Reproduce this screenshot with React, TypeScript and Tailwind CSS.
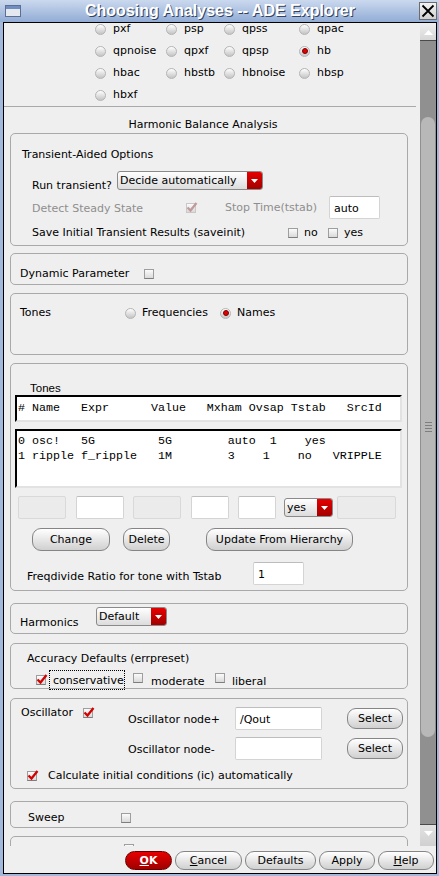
import type { ReactNode } from "react";

const analyses: [string, boolean][] = [
  ["pxf", false],
  ["psp", false],
  ["qpss", false],
  ["qpac", false],
  ["qpnoise", false],
  ["qpxf", false],
  ["qpsp", false],
  ["hb", true],
  ["hbac", false],
  ["hbstb", false],
  ["hbnoise", false],
  ["hbsp", false],
  ["hbxf", false],
];

const mono = "font-['Liberation_Mono',monospace] text-[11.67px]";

function Radio({ on = false }: { on?: boolean }) {
  return (
    <span className="flex h-[11px] w-[11px] shrink-0 items-center justify-center rounded-full border border-[#b4b4b4] bg-gradient-to-b from-white to-[#c4c4c4]">
      {on && <span className="h-[6px] w-[6px] rounded-full border border-[#7a0000] bg-[#e00000]" />}
    </span>
  );
}

function Check({ on = false, dim = false }: { on?: boolean; dim?: boolean }) {
  return (
    <span
      className={`relative inline-block h-[10px] w-[10px] shrink-0 border ${
        dim ? "border-[#c8c8c8]" : "border-[#9e9e9e] border-b-[#7d7d7d]"
      } bg-gradient-to-b from-[#fbfbfb] to-[#dadada]`}
    >
      {on && (
        <svg className="absolute left-[-1px] top-[-3px]" width="12" height="12" viewBox="0 0 12 12">
          <path
            d="M1.5 6.5 L4.5 9.5 L10.5 2"
            fill="none"
            stroke={dim ? "#c39a9a" : "#d40000"}
            strokeWidth="2.3"
          />
        </svg>
      )}
    </span>
  );
}

function Combo({ value, w }: { value: string; w: string }) {
  return (
    <div
      className={`flex h-[19px] ${w} shrink-0 overflow-hidden rounded-[3px] border border-[#8a8a8a] bg-gradient-to-b from-white to-[#dcdcdc]`}
    >
      <span className="flex-1 pl-[2px] leading-[17px]">{value}</span>
      <span className="flex w-[15px] items-center justify-center bg-gradient-to-b from-[#e60000] to-[#a20000]">
        <svg width="7" height="4" viewBox="0 0 7 4">
          <path d="M0 0 H7 L3.5 4 Z" fill="#fff" />
        </svg>
      </span>
    </div>
  );
}

function Field({ w, value, off = false }: { w: string; value?: string; off?: boolean }) {
  return (
    <div
      className={`h-[23px] ${w} shrink-0 rounded-[2px] border ${
        off ? "border-[#d9d9d9] bg-[#ebebeb]" : "border-[#d4d4d4] border-t-[#bdbdbd] bg-white"
      } pl-[4px] pt-[1px] leading-[21px]`}
    >
      {value}
    </div>
  );
}

function Btn({ w, h = "h-[23px]", children }: { w: string; h?: string; children: ReactNode }) {
  return (
    <div
      className={`flex ${h} ${w} shrink-0 items-center justify-center rounded-[9px] border border-[#858585] bg-gradient-to-b from-white to-[#d0d0d0] pt-[1px]`}
    >
      {children}
    </div>
  );
}

function Box({ className, children }: { className: string; children?: ReactNode }) {
  return (
    <div className={`ml-[6px] w-[398px] shrink-0 rounded-[5px] border border-[#a9a9a9] ${className}`}>
      {children}
    </div>
  );
}

function TitleBar() {
  return (
    <div className="flex h-[22px] shrink-0 items-center bg-gradient-to-b from-[#cbd9ee] to-[#92acd5] pl-[5px] pr-[2px]">
      <div className="flex h-[12px] w-[16px] flex-col border border-[#5c6f92] bg-[#e4e9f0]">
        <div className="h-[3px] bg-[#6f8dc0]" />
      </div>
      <div className="flex-1 text-center font-['Liberation_Sans',sans-serif] text-[16px] font-bold leading-[20px] text-white [text-shadow:1px_1px_0_#33425e]">
        Choosing Analyses -- ADE Explorer
      </div>
      <div className="flex h-[18px] w-[18px] items-center justify-center border border-[#6c6c6c] bg-gradient-to-b from-[#f4f4f4] to-[#d0d0d0]">
        <svg width="14" height="14" viewBox="0 0 14 14">
          <path d="M1.5 1.5 L12.5 12.5 M12.5 1.5 L1.5 12.5" stroke="#000" strokeWidth="1.8" />
        </svg>
      </div>
    </div>
  );
}

function ScrollBar() {
  return (
    <div className="flex w-[16px] shrink-0 flex-col bg-[#909090]">
      <div className="flex h-[18px] items-end justify-center border-b border-[#4a4a4a] bg-gradient-to-b from-[#efefef] to-[#d6d6d6] pb-[5px]">
        <svg width="9" height="5" viewBox="0 0 9 5">
          <path d="M0 5 H9 L4.5 0 Z" fill="#fff" />
        </svg>
      </div>
      <div className="h-[76px]" />
      <div className="mx-[1px] flex h-[620px] flex-col items-center justify-center gap-[2px] rounded-[7px] bg-[#b8b8b8]">
        <div className="h-px w-[7px] bg-[#7e7e7e]" />
        <div className="h-px w-[7px] bg-[#7e7e7e]" />
        <div className="h-px w-[7px] bg-[#7e7e7e]" />
        <div className="h-px w-[7px] bg-[#7e7e7e]" />
      </div>
      <div className="flex-1" />
      <div className="flex h-[22px] items-start justify-center border-t border-[#4a4a4a] bg-gradient-to-b from-[#e2e2e2] to-[#d0d0d0] pt-[6px]">
        <svg width="9" height="5" viewBox="0 0 9 5">
          <path d="M0 0 H9 L4.5 5 Z" fill="#fff" />
        </svg>
      </div>
    </div>
  );
}

export default function App() {
  return (
    <div className="flex h-[876px] w-[439px] flex-col overflow-hidden bg-[#a3b9dc] font-['DejaVu_Sans',sans-serif] text-[11px] leading-[14px] text-black">
      <TitleBar />
      <div className="mb-[2px] ml-[3px] mr-[2px] flex flex-1 flex-col border border-black bg-[#efefef]">
        <div className="flex h-[823px] shrink-0">
          <div className="flex w-[416px] flex-col overflow-hidden">
            {/* analysis choice */}
            <div className="-mt-[5px] ml-[91px] grid shrink-0 grid-cols-[71px_58px_75px_80px]">
              {analyses.map(([name, on]) => (
                <div key={name} className="flex h-[22px] items-center gap-[7px]">
                  <Radio on={on} />
                  {name}
                </div>
              ))}
            </div>
            <div className="mr-[4px] h-px shrink-0 bg-[#a9a9a9]" />
            <div className="mt-[11px] h-[14px] w-[398px] shrink-0 text-center">Harmonic Balance Analysis</div>

            {/* transient aided */}
            <Box className="mt-[1px] h-[113px] pl-[11px] pt-[14px]">
              <div className="h-[14px]">Transient-Aided Options</div>
              <div className="ml-[10px] mt-[9px] flex h-[21px] items-start">
                <span className="mt-[8px] w-[85px]">Run transient?</span>
                <Combo value="Decide automatically" w="w-[146px]" />
              </div>
              <div className="ml-[10px] mt-[4px] flex h-[23px] items-center text-[#8e8e8e]">
                <span className="w-[154px] pt-[2px]">Detect Steady State</span>
                <Check on dim />
                <span className="ml-[29px] w-[104px]">Stop Time(tstab)</span>
                <div className="text-black">
                  <Field w="w-[51px]" value="auto" />
                </div>
              </div>
              <div className="ml-[10px] mt-[7px] flex h-[14px] items-center">
                <span className="w-[256px]">Save Initial Transient Results (saveinit)</span>
                <Check />
                <span className="ml-[6px] w-[24px]">no</span>
                <Check />
                <span className="ml-[6px]">yes</span>
              </div>
            </Box>

            <Box className="mt-[7px] h-[32px] pl-[9px] pt-[13px]">
              <div className="flex h-[14px] items-center">
                <span className="w-[124px]">Dynamic Parameter</span>
                <Check />
              </div>
            </Box>

            <Box className="mt-[8px] h-[62px] pl-[9px] pt-[12px]">
              <div className="flex h-[14px] items-center">
                <span className="w-[105px]">Tones</span>
                <Radio />
                <span className="ml-[6px] w-[78px]">Frequencies</span>
                <Radio on />
                <span className="ml-[6px]">Names</span>
              </div>
            </Box>

            {/* tones table */}
            <Box className="mt-[8px] h-[228px] px-[4px] pt-[17px]">
              <div className="ml-[15px] h-[14px] font-['Liberation_Sans',sans-serif] text-[11.5px]">Tones</div>
              <div
                className={`h-[27px] w-[387px] whitespace-pre border-2 border-b-[#e2e2e2] border-l-black border-r-[#e2e2e2] border-t-black bg-white pl-[1px] pt-[4px] ${mono}`}
              >
                {"# Name   Expr      Value   Mxham Ovsap Tstab   SrcId"}
              </div>
              <div
                className={`mt-[7px] h-[59px] w-[387px] whitespace-pre border-2 border-b-[#e2e2e2] border-l-black border-r-[#e2e2e2] border-t-black bg-white pl-[1px] pt-[3px] leading-[15px] ${mono}`}
              >
                <div>{"0 osc!   5G         5G        auto  1    yes"}</div>
                <div>{"1 ripple f_ripple   1M        3    1    no   VRIPPLE"}</div>
              </div>
              <div className="mt-[8px] flex h-[23px] items-center">
                <div className="ml-[3px]">
                  <Field w="w-[48px]" off />
                </div>
                <div className="ml-[10px]">
                  <Field w="w-[48px]" />
                </div>
                <div className="ml-[9px]">
                  <Field w="w-[48px]" off />
                </div>
                <div className="ml-[10px]">
                  <Field w="w-[38px]" />
                </div>
                <div className="ml-[9px]">
                  <Field w="w-[38px]" />
                </div>
                <div className="ml-[8px]">
                  <Combo value="yes" w="w-[49px]" />
                </div>
                <div className="ml-[4px]">
                  <Field w="w-[59px]" off />
                </div>
              </div>
              <div className="mt-[9px] flex h-[23px] items-center">
                <div className="ml-[17px]">
                  <Btn w="w-[78px]">Change</Btn>
                </div>
                <div className="ml-[13px]">
                  <Btn w="w-[47px]">Delete</Btn>
                </div>
                <div className="ml-[36px]">
                  <Btn w="w-[147px]">Update From Hierarchy</Btn>
                </div>
              </div>
              <div className="mt-[11px] flex h-[23px] items-center">
                <span className="ml-[12px] w-[226px] pt-[7px]">Freqdivide Ratio for tone with Tstab</span>
                <Field w="w-[51px]" value="1" />
              </div>
            </Box>

            <Box className="mt-[12px] h-[31px] pl-[9px] pt-[3px]">
              <div className="flex items-start">
                <span className="mt-[9px] w-[76px]">Harmonics</span>
                <Combo value="Default" w="w-[71px]" />
              </div>
            </Box>

            <Box className="mt-[9px] h-[46px] pl-[16px] pt-[8px]">
              <div className="h-[14px]">Accuracy Defaults (errpreset)</div>
              <div className="ml-[9px] mt-[4px] flex h-[20px] items-center">
                <Check on />
                <span className="ml-[3px] h-[20px] w-[76px] border border-dotted border-black pl-[3px] pt-[2px] leading-[16px]">
                  conservative
                </span>
                <span className="ml-[8px]">
                  <Check />
                </span>
                <span className="ml-[8px] w-[56px] pt-[3px]">moderate</span>
                <span className="ml-[8px]">
                  <Check />
                </span>
                <span className="ml-[7px] pt-[3px]">liberal</span>
              </div>
            </Box>

            {/* oscillator */}
            <Box className="mt-[9px] h-[91px] pl-[10px] pt-[7px]">
              <div className="flex items-start">
                <div className="flex h-[14px] items-center">
                  <span className="w-[62px]">Oscillator</span>
                  <Check on />
                </div>
                <div className="ml-[35px] mt-[1px] flex flex-col">
                  <div className="flex h-[23px] items-center">
                    <span className="w-[107px] pt-[3px]">Oscillator node+</span>
                    <Field w="w-[87px]" value="/Qout" />
                    <div className="ml-[25px]">
                      <Btn w="w-[56px]" h="h-[21px]">
                        Select
                      </Btn>
                    </div>
                  </div>
                  <div className="mt-[7px] flex h-[23px] items-center">
                    <span className="w-[107px] pt-[3px]">Oscillator node-</span>
                    <Field w="w-[87px]" />
                    <div className="ml-[25px]">
                      <Btn w="w-[56px]" h="h-[21px]">
                        Select
                      </Btn>
                    </div>
                  </div>
                </div>
              </div>
              <div className="ml-[6px] mt-[9px] flex h-[14px] items-center">
                <Check on />
                <span className="ml-[11px]">Calculate initial conditions (ic) automatically</span>
              </div>
            </Box>

            <Box className="mt-[12px] h-[27px] pl-[17px] pt-[9px]">
              <div className="flex h-[14px] items-center">
                <span className="w-[93px]">Sweep</span>
                <Check />
              </div>
            </Box>

            <Box className="mt-[8px] h-[40px] pl-[113px] pt-[7px]">
              <Check />
            </Box>
          </div>
          <ScrollBar />
        </div>

        {/* dialog buttons */}
        <div className="flex flex-1 items-start justify-end gap-[3px] pr-[2px] pt-[5px]">
          <div className="flex h-[19px] w-[47px] items-center justify-center rounded-[10px] border border-[#6a0000] bg-gradient-to-b from-[#e80000] to-[#a00000] pt-[1px] font-bold text-white">
            <span className="underline">O</span>K
          </div>
          <Btn w="w-[67px]" h="h-[19px]">
            <span className="underline">C</span>ancel
          </Btn>
          <Btn w="w-[71px]" h="h-[19px]">
            Defaults
          </Btn>
          <Btn w="w-[56px]" h="h-[19px]">
            Apply
          </Btn>
          <Btn w="w-[56px]" h="h-[19px]">
            <span className="underline">H</span>elp
          </Btn>
        </div>
      </div>
    </div>
  );
}
